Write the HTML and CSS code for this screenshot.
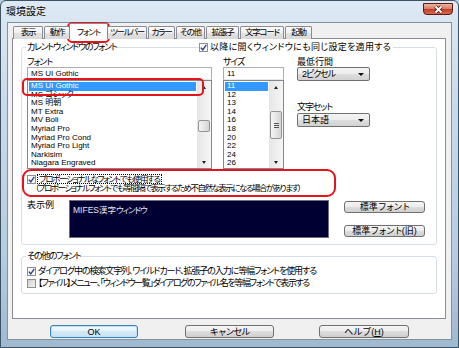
FILE: index.html
```html
<!DOCTYPE html>
<html lang="ja">
<head>
    <meta charset="UTF-8">
    <meta name="viewport" content="width=device-width, initial-scale=1.0">
    <title>環境設定</title>
    <link rel="stylesheet" href="styles.css">
</head>
<body>

<div class="window">
    <div class="titlebar">
        <span class="title">環境設定</span>
        <span class="close-btn">
            <svg width="11" height="9" viewBox="0 0 11 9">
                <path d="M2.5 1.5 L8.5 7.5 M8.5 1.5 L2.5 7.5" stroke="#5a1b10" stroke-width="3.6"/>
                <path d="M2.5 1.5 L8.5 7.5 M8.5 1.5 L2.5 7.5" stroke="#fff" stroke-width="1.8"/>
            </svg>
        </span>
    </div>

    <div class="client">
        <div class="tabs">
            <span class="tab t1">表示</span>
            <span class="tab t2">動作</span>
            <span class="tab t3 active">フォント</span>
            <span class="tab t4">ツールバー</span>
            <span class="tab t5">カラー</span>
            <span class="tab t6">その他</span>
            <span class="tab t7">拡張子</span>
            <span class="tab t8">文字コード</span>
            <span class="tab t9">起動</span>
        </div>

        <div class="panel">
            <div class="group group-current">
                <div class="group-head">
                    <span class="group-title">カレントウィンドウのフォント</span>
                    <label class="check apply">
                        <span class="box checked"><svg width="7" height="7" viewBox="0 0 7 7"><path d="M0.8 3.6 L2.8 5.8 L6.3 0.8" fill="none" stroke="#2a3f8f" stroke-width="1.4"/></svg></span>以降に開くウィンドウにも同じ設定を適用する
                    </label>
                </div>

                <div class="font-row">
                    <div class="col col-font">
                        <div class="field-label kana">フォント</div>
                        <div class="edit">MS UI Gothic</div>
                        <div class="listbox">
                            <ul class="items">
                                <li class="selected">MS UI Gothic</li>
                                <li>MS ゴシック</li>
                                <li>MS 明朝</li>
                                <li>MT Extra</li>
                                <li>MV Boli</li>
                                <li>Myriad Pro</li>
                                <li>Myriad Pro Cond</li>
                                <li>Myriad Pro Light</li>
                                <li>Narkisim</li>
                                <li>Niagara Engraved</li>
                            </ul>
                            <div class="vscroll">
                                <span class="arrow up"></span>
                                <span class="track"><span class="thumb thumb-font"></span></span>
                                <span class="arrow down"></span>
                            </div>
                        </div>
                    </div>

                    <div class="col col-size">
                        <div class="field-label kana">サイズ</div>
                        <div class="edit">11</div>
                        <div class="listbox">
                            <ul class="items">
                                <li class="selected">11</li>
                                <li>12</li>
                                <li>13</li>
                                <li>14</li>
                                <li>16</li>
                                <li>18</li>
                                <li>20</li>
                                <li>22</li>
                                <li>24</li>
                                <li>26</li>
                            </ul>
                            <div class="vscroll">
                                <span class="arrow up"></span>
                                <span class="track"><span class="thumb thumb-size"><span class="grip"></span></span></span>
                                <span class="arrow down"></span>
                            </div>
                        </div>
                    </div>

                    <div class="col col-opt">
                        <div class="field-label">最低行間</div>
                        <div class="combo kana">2ピクセル</div>
                        <div class="field-label charset-label kana">文字セット</div>
                        <div class="combo">日本語</div>
                    </div>
                </div>

                <div class="prop">
                    <label class="check">
                        <span class="box checked"><svg width="7" height="7" viewBox="0 0 7 7"><path d="M0.8 3.6 L2.8 5.8 L6.3 0.8" fill="none" stroke="#2a3f8f" stroke-width="1.4"/></svg></span><span class="focus">プロポーショナルなフォントでも使用する</span>
                    </label>
                    <div class="note">（プロポーショナルフォントでも等間隔で表示するため不自然な表示になる場合があります）</div>
                </div>

                <div class="preview-row">
                    <div class="preview-label">表示例</div>
                    <div class="preview-box">MIFES漢字<span class="kana">ウィンドウ</span></div>
                    <div class="preview-buttons">
                        <button class="btn">標準<span class="kana">フォント</span></button>
                        <button class="btn">標準<span class="kana">フォント</span>(旧)</button>
                    </div>
                </div>
            </div>

            <div class="group group-other">
                <div class="group-head">
                    <span class="group-title">その他のフォント</span>
                </div>
                <label class="check line kana">
                    <span class="box checked"><svg width="7" height="7" viewBox="0 0 7 7"><path d="M0.8 3.6 L2.8 5.8 L6.3 0.8" fill="none" stroke="#2a3f8f" stroke-width="1.4"/></svg></span>ダイアログ中の検索文字列、ワイルドカード、拡張子の入力に等幅フォントを使用する
                </label>
                <label class="check line kana line-file">
                    <span class="box"></span>【ファイル】メニュー、「ウィンドウ一覧」ダイアログのファイル名を等幅フォントで表示する
                </label>
            </div>
        </div>

        <div class="dialog-buttons">
            <button class="btn btn-ok">OK</button>
            <button class="btn btn-cancel kana">キャンセル</button>
            <button class="btn btn-help">ヘルプ(<u>H</u>)</button>
        </div>
    </div>

    <!-- red annotation marks -->
    <span class="mark mark-tab"></span>
    <span class="mark mark-item"></span>
    <span class="mark mark-prop"></span>
</div>

</body>
</html>
```

FILE: styles.css
```css
* {
    box-sizing: border-box;
}
body {
    margin: 0;
    width: 459px;
    height: 348px;
    overflow: hidden;
    font-family: "Liberation Sans", "Noto Sans CJK JP", sans-serif;
    font-size: 9px;
    line-height: 10px;
    font-feature-settings: "palt";
    color: #000;
    background: #b9cde0;
}
/* katakana in the original font is narrow */
.kana {
    letter-spacing: -1.1px;
}
.window {
    position: relative;
    height: 348px;
    display: flex;
    flex-direction: column;
    padding: 0 6px 7px 6px;
    border: 1px solid #3f5263;
    border-radius: 6px 6px 0 0;
    background: linear-gradient(#dde9f4, #c8dbeb 30%, #b5cbdf 75%, #9fb9d0);
}
.titlebar {
    height: 21px;
    display: flex;
    justify-content: space-between;
    align-items: flex-start;
}
.title {
    margin: 5px 0 0 -1px;
    font-size: 10px;
    line-height: 12px;
}
.close-btn {
    width: 30px;
    height: 12px;
    margin: 2px -1px 0 0;
    display: flex;
    align-items: center;
    justify-content: center;
    border: 1px solid #5c1a10;
    border-radius: 0 0 4px 4px;
    background: linear-gradient(#e9b3a3, #d98068 45%, #c2402a 55%, #d66a4e);
}

/* client area */
.client {
    flex: 1;
    display: flex;
    flex-direction: column;
    background: #f0f0f0;
    border: 1px solid #7f93a7;
}
.tabs {
    display: flex;
    align-items: flex-end;
    height: 16px;
    margin: 0 0 -1px 5px;
    position: relative;
    z-index: 1;
}
.tab {
    height: 13px;
    margin-right: 1px;
    border: 1px solid #898c95;
    border-bottom: none;
    border-radius: 2px 2px 0 0;
    background: linear-gradient(#fbfbfb, #efefef 50%, #e3e3e3 50%, #dadada);
    font-size: 8.5px;
    line-height: 11px;
    text-align: center;
    white-space: nowrap;
    letter-spacing: -1.2px;
}
.tab.active {
    height: 16px;
    padding-top: 3px;
    margin: 0 -1px 0 -2px;
    background: #fff;
    position: relative;
}
.t1 { width: 30px; }
.t2 { width: 26px; }
.t3 { width: 39px; }
.t4 { width: 40px; letter-spacing: -1.4px; }
.t5 { width: 27px; }
.t6 { width: 29px; }
.t7 { width: 33px; }
.t8 { width: 44px; }
.t9 { width: 27px; }

.panel {
    height: 281px;
    margin: 0 5px 0 4px;
    padding: 8px 8px 0 8px;
    background: #fff;
    border: 1px solid #898c95;
}

/* group boxes */
.group {
    border: 1px solid #d5dfe5;
    border-radius: 3px;
    padding: 0 5px;
}
.group-current {
    height: 198px;
}
.group-other {
    height: 38px;
    margin-top: 11px;
}
.group-head {
    display: grid;
    grid-template-columns: 172px auto;
    justify-content: start;
    margin-top: -6px;
    height: 10px;
}
.group-title {
    justify-self: start;
    background: #fff;
    padding: 0 1px;
    margin-left: -1px;
    letter-spacing: -1.3px;
}
.apply {
    background: #fff;
    padding-right: 2px;
    letter-spacing: 0.3px;
}

/* checkboxes */
.check {
    display: flex;
    align-items: center;
    white-space: nowrap;
}
.box {
    width: 9px;
    height: 9px;
    margin-right: 2px;
    flex: none;
    display: flex;
    align-items: center;
    justify-content: center;
    border: 1px solid #8e8f8f;
    background: linear-gradient(135deg, #cfcfcf, #f4f4f4);
}
.box.checked {
    background: #fbfbfb;
}
.focus {
    border: 1px dotted #000;
    line-height: 8px;
    padding: 0 1px;
    margin-left: -1px;
    font-size: 8.5px;
    letter-spacing: -1.4px;
}

/* font / size / options */
.font-row {
    display: flex;
    margin-top: 5px;
}
.col-font {
    width: 185px;
}
.col-size {
    width: 61px;
    margin-left: 11px;
}
.col-opt {
    width: 73px;
    margin-left: 13px;
}
.field-label {
    height: 10px;
}
.charset-label {
    margin-top: 21px;
    height: 11px;
}
.edit {
    height: 13px;
    padding-left: 3px;
    line-height: 11px;
    font-size: 8px;
    background: #fff;
    border: 1px solid #abadb3;
    border-bottom-color: #e3e9ef;
}
.listbox {
    height: 89px;
    display: flex;
    background: #fff;
    border: 1px solid #828790;
}
.items {
    flex: 1;
    list-style: none;
    margin: 0;
    padding: 1px 1px 0 1px;
    overflow: hidden;
    font-size: 8px;
}
.items li {
    height: 8.6px;
    line-height: 8.6px;
    padding-left: 2px;
    white-space: nowrap;
}
.items li.selected {
    background: #3399ff;
    color: #fff;
}
.vscroll {
    width: 14px;
    display: flex;
    flex-direction: column;
    background: linear-gradient(90deg, #e6e6e6, #f5f5f5);
}
.arrow {
    height: 13px;
    display: flex;
    align-items: center;
    justify-content: center;
}
.arrow::before {
    content: "";
    border: 2.5px solid transparent;
}
.arrow.up::before {
    border-bottom: 3px solid #222;
    margin-top: -3px;
}
.arrow.down::before {
    border-top: 3px solid #222;
    margin-top: 3px;
}
.track {
    flex: 1;
}
.thumb {
    display: flex;
    align-items: center;
    justify-content: center;
    margin: 0 1px;
    border: 1px solid #959595;
    border-radius: 2px;
    background: linear-gradient(90deg, #f4f4f4, #e6e6e6 50%, #d4d4d4);
}
.thumb-font {
    height: 12px;
    margin-top: 26px;
}
.thumb-size {
    height: 28px;
    margin-top: 17px;
}
.grip {
    width: 5px;
    height: 5px;
    background: repeating-linear-gradient(#555 0 1px, transparent 1px 2px);
}
.combo {
    position: relative;
    height: 14px;
    padding-left: 4px;
    line-height: 12px;
    border: 1px solid #707070;
    border-radius: 2px;
    background: linear-gradient(#f4f4f4, #ececec 50%, #dedede 50%, #d2d2d2);
}
.combo::after {
    content: "";
    position: absolute;
    right: 5px;
    top: 5px;
    border: 3px solid transparent;
    border-top: 3px solid #111;
    border-bottom: none;
}

/* proportional */
.prop {
    margin-top: 5px;
}
.note {
    padding-left: 8px;
    line-height: 9px;
    white-space: nowrap;
    font-size: 8.5px;
    letter-spacing: -1.5px;
}

/* preview */
.preview-row {
    display: flex;
    margin-top: 7px;
}
.preview-label {
    width: 42px;
}
.preview-box {
    width: 260px;
    height: 38px;
    padding: 4px 0 0 3px;
    font-size: 8.5px;
    color: #e6e6f0;
    background: #000033;
    border: 1px solid #6d6d80;
}
.preview-buttons {
    width: 81px;
    margin-left: 15px;
    display: flex;
    flex-direction: column;
}
.preview-buttons .btn {
    height: 12px;
    margin-top: 1px;
}
.preview-buttons .btn + .btn {
    margin-top: 12px;
}

.line {
    height: 12px;
}
.line-file {
    letter-spacing: -1.4px;
}
.group-other .group-head + .line {
    margin-top: 4px;
}

/* buttons */
.btn {
    font-family: inherit;
    font-size: 9px;
    line-height: 10px;
    padding: 0;
    color: #000;
    border: 1px solid #707070;
    border-radius: 3px;
    background: linear-gradient(#f4f4f4, #ececec 50%, #dddddd 50%, #d0d0d0);
}
.dialog-buttons {
    display: flex;
    margin: 6px 0 0 42px;
}
.dialog-buttons .btn {
    height: 13px;
}
.btn-ok {
    width: 88px;
    border-color: #3c7fb1;
    background: linear-gradient(#f2f9fd, #e4f1fa 50%, #d4e9f6 50%, #c9e2f3);
    box-shadow: inset 0 0 0 1px #bfe4f8;
}
.btn-cancel {
    width: 89px;
    margin-left: 47px;
}
.btn-help {
    width: 90px;
    margin-left: 45px;
}

/* red annotation marks */
.mark {
    position: absolute;
    border: 2px solid #e3141c;
    border-radius: 5px;
}
.mark-tab {
    left: 66px;
    top: 21px;
    width: 43px;
    height: 21px;
}
.mark-item {
    left: 21px;
    top: 77px;
    width: 182px;
    height: 18px;
}
.mark-prop {
    left: 21px;
    top: 168px;
    width: 314px;
    height: 28px;
    border-radius: 9px;
}
```
